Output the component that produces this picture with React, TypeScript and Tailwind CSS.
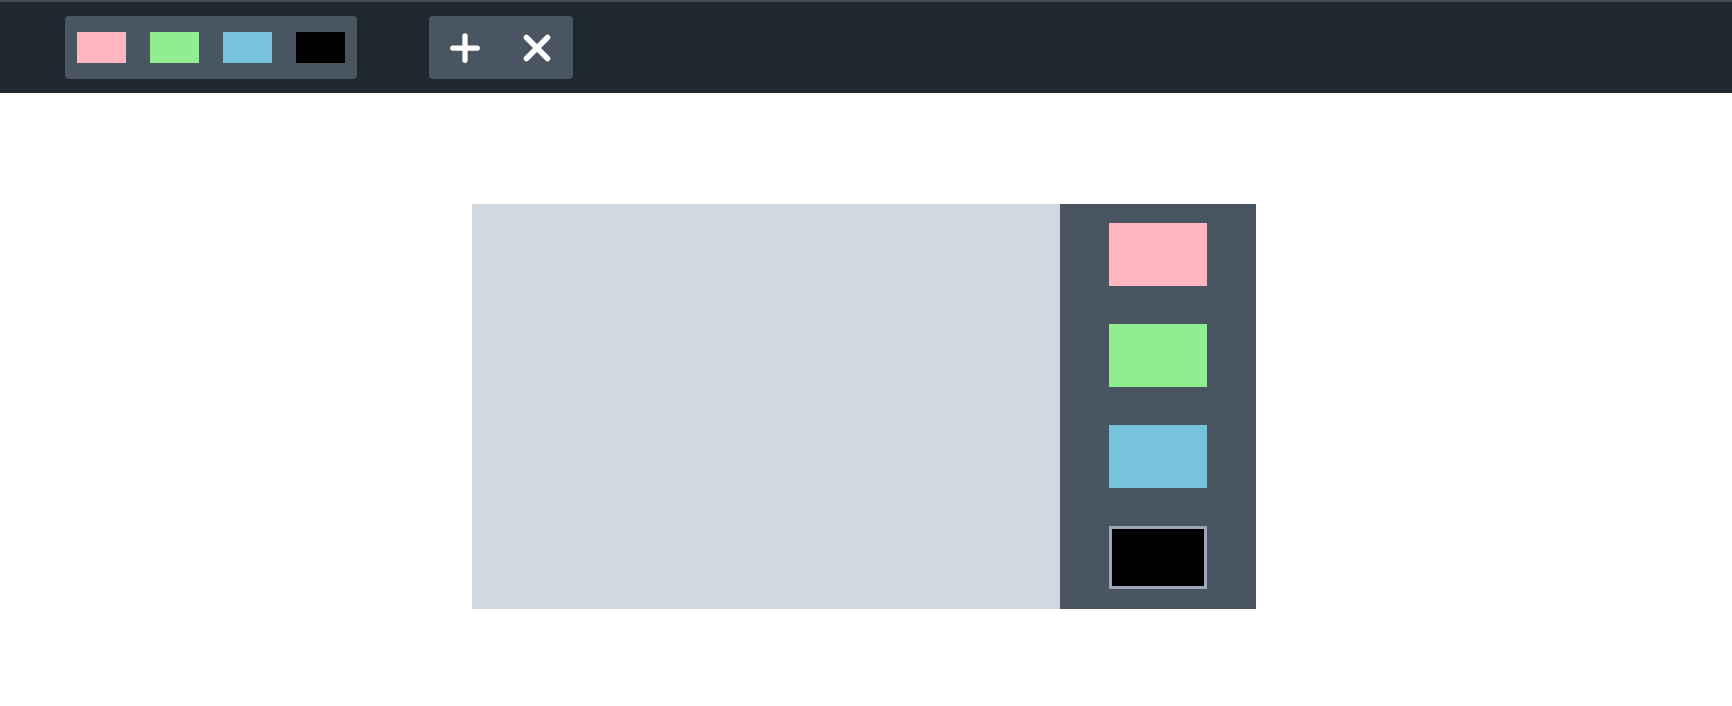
import { Plus, X } from 'lucide-react'

const COLORS = ['#ffb6c1', '#90ee90', '#78c3dc', '#000000']

export default function App() {
  return (
    <div className="min-h-screen bg-white" style={{ fontFamily: 'Inter, sans-serif' }}>
      {/* Toolbar */}
      <div className="h-[93px] bg-[#1f272f] border-t-2 border-[#4a4c4f] flex items-start pt-[14px] pl-[65px] gap-[72px]">
        <div className="flex gap-6 px-3 py-4 bg-[#4a5562] rounded">
          {COLORS.map((c) => (
            <button key={c} className="w-[49px] h-[31px]" style={{ background: c }} />
          ))}
        </div>
        <div className="flex h-[63px] bg-[#4a5562] rounded">
          <button className="w-[72px] flex items-center justify-center text-white">
            <Plus size={42} strokeWidth={3} />
          </button>
          <button className="w-[72px] flex items-center justify-center text-white">
            <X size={42} strokeWidth={3.2} />
          </button>
        </div>
      </div>

      {/* Canvas + palette */}
      <div className="flex justify-center pt-[111px] pr-1">
        <div className="w-[588px] h-[405px] bg-[#d1d8e0]" />
        <div className="w-[196px] h-[405px] bg-[#4a5562] flex flex-col items-center py-[19px] gap-[38px]">
          {COLORS.map((c, i) => (
            <button
              key={c}
              className={
                i === 3
                  ? 'w-[98px] h-[63px] border-[3px] border-[#9ca8ba]'
                  : 'w-[98px] h-[63px]'
              }
              style={{ background: c }}
            />
          ))}
        </div>
      </div>
    </div>
  )
}
